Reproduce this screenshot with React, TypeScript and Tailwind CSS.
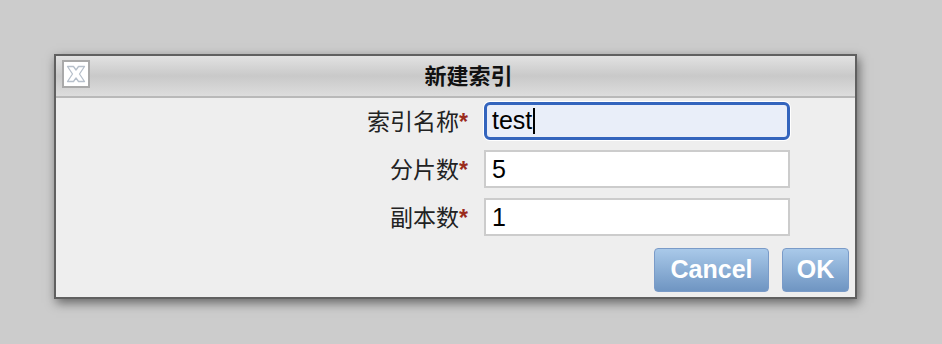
import React from 'react'

const font = { fontFamily: '"Liberation Sans", "Noto Sans CJK SC", Arial, sans-serif' }

function CloseIcon() {
  return (
    <svg width="20" height="18" viewBox="0 0 20 18" fill="none">
      <path
        d="M1.5 1.5 L7.5 1.5 L10 5 L12.5 1.5 L18.5 1.5 L13.5 9 L18.5 16.5 L12.5 16.5 L10 13 L7.5 16.5 L1.5 16.5 L6.5 9 Z"
        fill="#ffffff"
        stroke="#b7c0cb"
        strokeWidth="1.3"
        strokeLinejoin="round"
      />
    </svg>
  )
}

function FieldRow({ label, children }: { label: string; children: React.ReactNode }) {
  return (
    <div className="flex items-center gap-4">
      <div className="w-[412px] pt-[3px] text-right text-[23px] leading-none text-[#222]">
        {label}
        <span className="font-bold text-[#9a2b1c]">*</span>
      </div>
      {children}
    </div>
  )
}

export default function App() {
  return (
    <div className="min-h-[344px] w-[942px] bg-[#cccccc] pl-[54px] pt-[54px]" style={font}>
      <div className="w-[803px] border-2 border-[#606060] bg-[#eeeeee] shadow-[2px_4px_10px_rgba(0,0,0,0.5)]">
        {/* title bar */}
        <div className="relative flex h-[42px] items-center justify-center border-b-2 border-[#b9b9b9] bg-gradient-to-b from-[#e2e2e2] via-[#c9c9c9] to-[#dddddd]">
          <button className="absolute left-[6px] top-[4px] flex h-[28px] w-[28px] items-center justify-center border-2 border-[#a9a9a9] bg-white">
            <CloseIcon />
          </button>
          <span className="ml-[26px] text-[22px] font-bold text-[#111]">新建索引</span>
        </div>

        {/* form */}
        <div className="flex flex-col gap-[10px] pt-[4px]">
          <FieldRow label="索引名称">
            <div className="flex h-[38px] w-[306px] items-center rounded-[6px] border-[3px] border-[#3364bd] bg-[#e9eef9] px-[5px] text-[25px] text-black shadow-[0_0_0_1px_#ffffff]">
              test
              <span className="ml-[1px] h-[26px] w-[2px] bg-black" />
            </div>
          </FieldRow>
          <FieldRow label="分片数">
            <input
              readOnly
              value="5"
              className="h-[38px] w-[306px] border-2 border-[#cccccc] bg-white px-[6px] text-[25px] text-black outline-none"
            />
          </FieldRow>
          <FieldRow label="副本数">
            <input
              readOnly
              value="1"
              className="h-[38px] w-[306px] border-2 border-[#cccccc] bg-white px-[6px] text-[25px] text-black outline-none"
            />
          </FieldRow>
        </div>

        {/* buttons */}
        <div className="flex justify-end gap-[13px] pb-[5px] pr-[6px] pt-[12px]">
          <button className="h-[44px] w-[115px] rounded-[4px] border border-[#7a9bc8] bg-gradient-to-b from-[#a9c9e9] to-[#6f95c2] text-[25px] font-bold text-white">
            Cancel
          </button>
          <button className="h-[44px] w-[67px] rounded-[4px] border border-[#7a9bc8] bg-gradient-to-b from-[#a9c9e9] to-[#6f95c2] text-[25px] font-bold text-white">
            OK
          </button>
        </div>
      </div>
    </div>
  )
}
